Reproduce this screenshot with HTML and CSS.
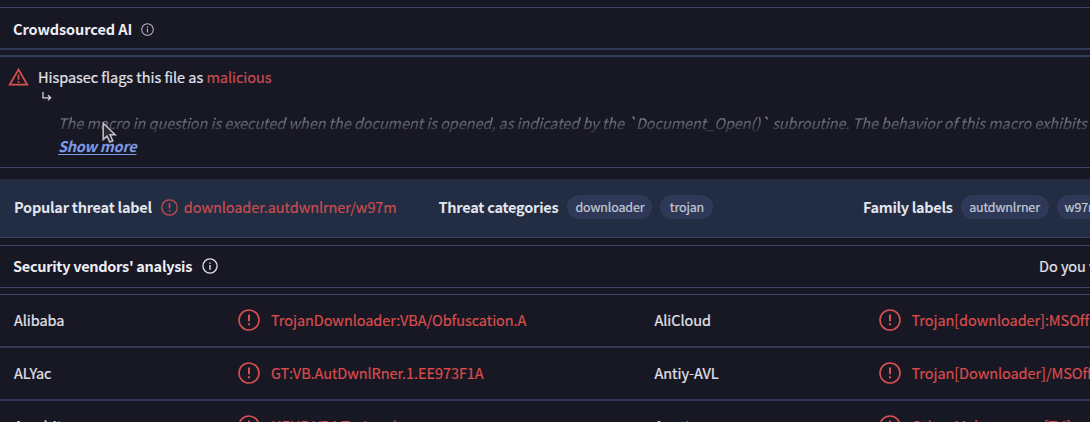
FILE: index.html
```html
<!DOCTYPE html>
<html lang="en">
<head>
<meta charset="utf-8">
<title>File analysis</title>
<link rel="stylesheet" href="styles.css">
</head>
<body>
<svg class="sprite" width="0" height="0">
  <symbol id="alert" viewBox="0 0 22 22"><circle cx="11" cy="11" r="10" fill="none" stroke="currentColor" stroke-width="1.6"/><path d="M11 5.4v6.8M11 14.2v2" stroke="currentColor" stroke-width="2"/></symbol>
  <symbol id="info" viewBox="0 0 16 16"><circle cx="8" cy="8" r="7.1" fill="none" stroke="currentColor" stroke-width="1.3"/><path d="M8 4.4v1.4M8 7.1v4.7" stroke="currentColor" stroke-width="1.4"/></symbol>
</svg>
<main class="page">
  <header class="bar bar-ai"><h2 class="title title-ai">Crowdsourced AI</h2><svg class="info-sm"><use href="#info"/></svg></header>
  <section class="verdict">
    <div class="flag">
      <svg class="warning" viewBox="0 0 20 18"><path d="M10 1.5 18.8 16.7H1.2Z" fill="none" stroke="currentColor" stroke-width="1.7"/><path d="M10 6.7v5M10 13v1.7" stroke="currentColor" stroke-width="1.7"/></svg>
      <p class="flag-text">Hispasec flags this file as <span class="red">malicious</span></p>
    </div>
    <svg class="branch" viewBox="0 0 10 10"><path d="M1 0v5.8h7.5M6 3.2l2.7 2.6L6 8.4" fill="none" stroke="currentColor" stroke-width="1.3"/></svg>
    <p class="excerpt">The macro in question is executed when the document is opened, as indicated by the `Document_Open()` subroutine. The behavior of this macro exhibits</p>
    <a class="more">Show more</a>
    <svg class="cursor" viewBox="0 0 15 22"><path d="M1.2 1.2v16.3l3.8-3.4 2.8 6 3-1.3-2.7-6h5.1Z" fill="#292a31" stroke="#c4c4c8" stroke-width="1.5"/></svg>
  </section>
  <section class="threat">
    <div class="group"><strong class="label popular">Popular threat label</strong><svg class="alert-sm"><use href="#alert"/></svg><span class="threat-name">downloader.autdwnlrner/w97m</span></div>
    <div class="group"><strong class="label categories">Threat categories</strong><span class="chip chip-downloader">downloader</span><span class="chip chip-trojan">trojan</span></div>
    <div class="group"><strong class="label family">Family labels</strong><span class="chip chip-family">autdwnlrner</span><span class="chip chip-last">w97m</span></div>
  </section>
  <header class="bar bar-vendors"><h2 class="title title-vendors">Security vendors' analysis</h2><svg class="info-md"><use href="#info"/></svg><span class="question">Do you want to automate checks?</span></header>
  <section class="vendors">
    <div class="row"><span class="vendor">Alibaba</span><svg class="alert"><use href="#alert"/></svg><span class="result">TrojanDownloader:VBA/Obfuscation.A</span><span class="vendor">AliCloud</span><svg class="alert"><use href="#alert"/></svg><span class="result">Trojan[downloader]:MSOffice/Agent</span></div>
    <div class="row"><span class="vendor">ALYac</span><svg class="alert"><use href="#alert"/></svg><span class="result">GT:VB.AutDwnlRner.1.EE973F1A</span><span class="vendor">Antiy-AVL</span><svg class="alert"><use href="#alert"/></svg><span class="result">Trojan[Downloader]/MSOffice.Agent</span></div>
    <div class="row"><span class="vendor">Arcabit</span><svg class="alert"><use href="#alert"/></svg><span class="result">HEUR.VBA.Trojan.d</span><span class="vendor">Avast</span><svg class="alert"><use href="#alert"/></svg><span class="result">Other:Malware-gen [Trj]</span></div>
  </section>
</main>
</body>
</html>
```
FILE: styles.css
```css
* { box-sizing: border-box; }
body { margin: 0; background: #181724; overflow: hidden; }
.sprite { display: block; height: 0; }
.page { width: 1090px; height: 422px; overflow: hidden; padding-top: 7px; color: #e2e3ea; font: 14.5px/20px "Noto Sans CJK SC", "Noto Sans", sans-serif; letter-spacing: -0.04px; -webkit-text-stroke: 0.2px currentColor; white-space: nowrap; }
p, h2 { margin: 0; }
svg { flex: none; display: block; }
.bar { display: flex; align-items: center; padding-left: 13px; border-top: 1px solid #3b4463; }
.bar-ai { height: 43px; padding-top: 2px; border-bottom: 2px solid #303a56; }
.title { font-size: 14.5px; line-height: 20px; font-weight: 700; color: #ecedf2; -webkit-text-stroke: 0; }
.title-ai { letter-spacing: -0.08px; }
.title-vendors { letter-spacing: -0.29px; }
.info-sm { width: 13px; height: 13px; margin-left: 9px; color: #b9bac5; }
.verdict { position: relative; height: 113px; margin-top: 5px; padding-top: 10px; border-top: 2px solid #333e5b; border-bottom: 1px solid #3b4463; }
.flag { display: flex; align-items: center; height: 20px; padding-left: 8px; }
.warning { width: 21px; height: 18px; color: #d6514f; }
.flag-text { margin-left: 9px; }
.red { color: #c94c50; }
.branch { width: 10px; height: 10px; margin: 5px 0 0 42px; color: #d0d1da; }
.excerpt { margin: 11px 0 0 58px; font-style: italic; letter-spacing: -0.065px; background: linear-gradient(#8a8b98 20%, #3e3e4c 85%); background-clip: text; color: transparent; -webkit-text-stroke: 0.2px transparent; }
.more { display: block; width: max-content; margin: 3px 0 0 58px; color: #7e9be8; font-style: italic; font-weight: 700; letter-spacing: -0.25px; text-decoration: underline; text-underline-offset: 2px; -webkit-text-stroke: 0; }
.cursor { position: absolute; left: 102px; top: 65px; width: 15px; height: 22px; }
.threat { display: grid; grid-template-columns: 424.5px 424.5px 1fr; height: 59px; margin-top: 11px; padding: 0 0 2px 14px; background: #222c43; border-bottom: 1px solid #3a4360; }
.group { display: flex; align-items: center; }
.label { color: #e1e5ed; letter-spacing: -0.24px; -webkit-text-stroke: 0; }
.family { letter-spacing: -0.32px; }
.alert-sm { width: 17px; height: 17px; margin: 0 6px 0 9px; color: #c94c50; }
.threat-name { color: #c94c50; letter-spacing: -0.08px; }
.chip { flex: none; height: 24px; border-radius: 12px; margin-left: 8px; background: #2f3957; color: #c2cad9; font-size: 12.5px; line-height: 23px; letter-spacing: -0.15px; text-align: center; }
.chip-downloader { width: 85px; margin-left: 9px; }
.chip-trojan { width: 53px; }
.chip-family { width: 88px; }
.chip-last { width: 51px; }
.bar-vendors { height: 43px; margin-top: 7px; padding-bottom: 1px; border-bottom: 1px solid #3b4463; }
.info-md { width: 16px; height: 16px; margin-left: 10px; }
.question { margin-left: auto; width: 51px; overflow: hidden; }
.vendors { margin-top: 6px; border-top: 1px solid #3b4463; }
.row { display: grid; grid-template-columns: 223.5px 33.5px 383.5px 224px 33px 1fr; align-items: center; height: 53px; padding: 0 0 2px 14px; border-bottom: 2px solid #303a56; }
.alert { width: 22px; height: 22px; color: #d6514f; }
.result { color: #d84d4b; letter-spacing: -0.07px; }
```
